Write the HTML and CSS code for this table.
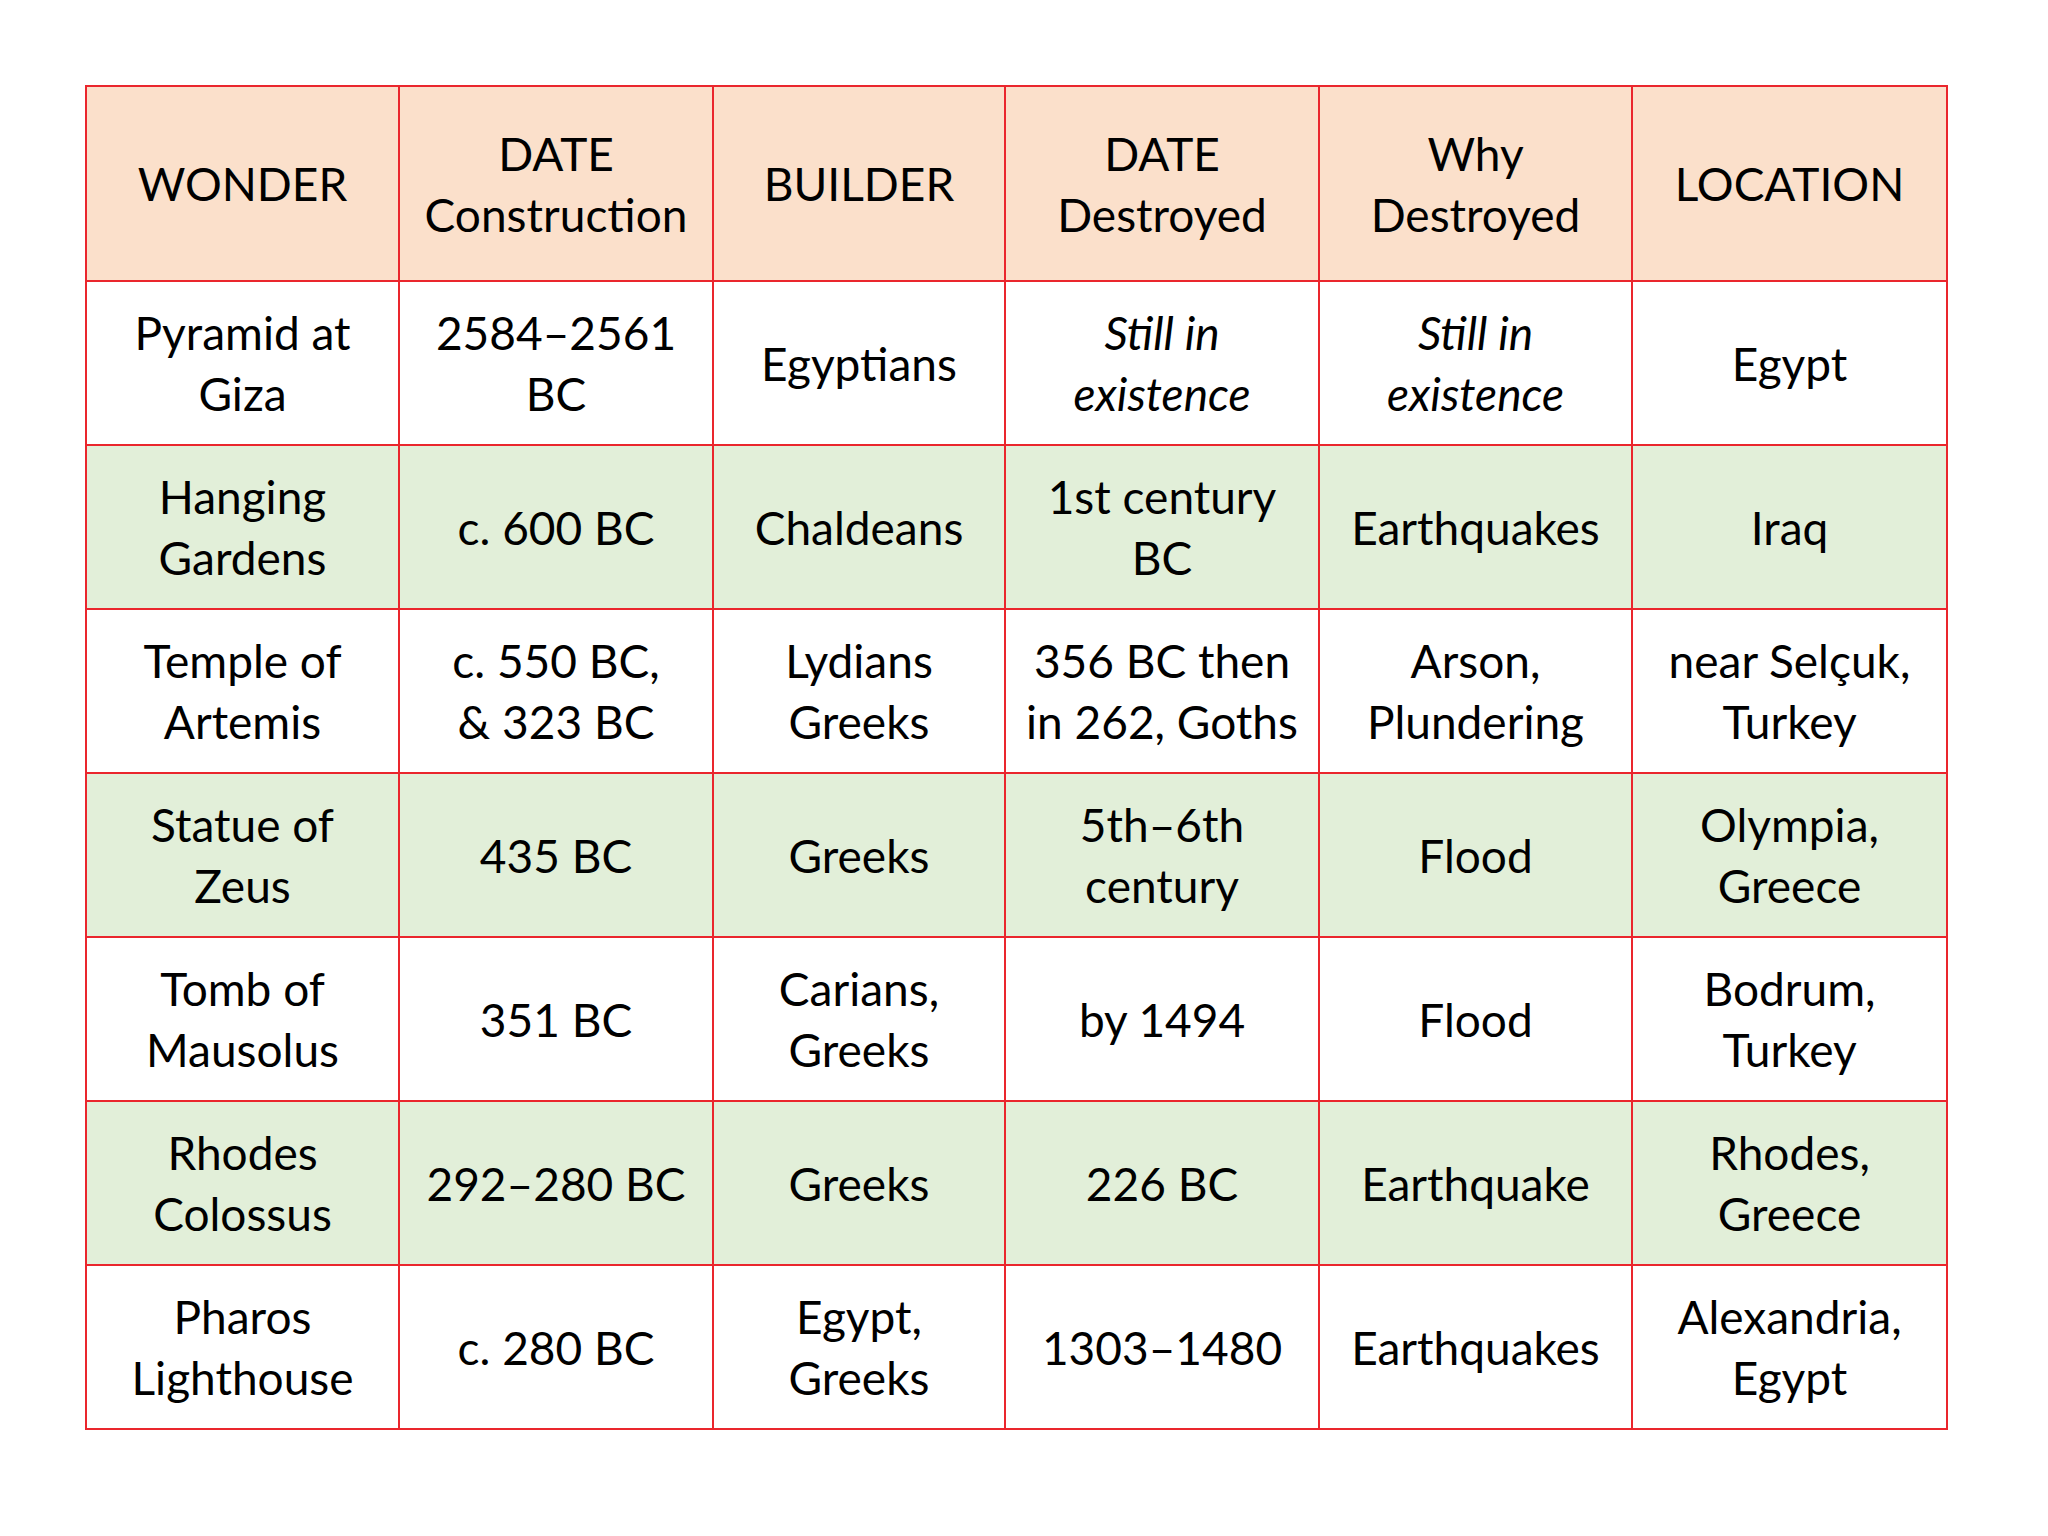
FILE: index.html
```html
<!DOCTYPE html>
<html>
<head>
<meta charset="utf-8">
<link rel="stylesheet" href="styles.css">
</head>
<body>
<table class="wonders">
  <colgroup>
    <col class="c1"><col class="c2"><col class="c3"><col class="c4"><col class="c5"><col class="c6">
  </colgroup>
  <thead>
    <tr class="head">
      <th>WONDER</th>
      <th>DATE<br>Construction</th>
      <th>BUILDER</th>
      <th>DATE<br>Destroyed</th>
      <th>Why<br>Destroyed</th>
      <th>LOCATION</th>
    </tr>
  </thead>
  <tbody>
    <tr class="plain">
      <td>Pyramid at<br>Giza</td>
      <td>2584–2561<br>BC</td>
      <td>Egyptians</td>
      <td class="it">Still in<br>existence</td>
      <td class="it">Still in<br>existence</td>
      <td>Egypt</td>
    </tr>
    <tr class="green">
      <td>Hanging<br>Gardens</td>
      <td>c. 600 BC</td>
      <td>Chaldeans</td>
      <td>1st century<br>BC</td>
      <td>Earthquakes</td>
      <td>Iraq</td>
    </tr>
    <tr class="plain">
      <td>Temple of<br>Artemis</td>
      <td>c. 550 BC,<br>&amp; 323 BC</td>
      <td>Lydians<br>Greeks</td>
      <td>356 BC then<br>in 262, Goths</td>
      <td>Arson,<br>Plundering</td>
      <td>near Selçuk,<br>Turkey</td>
    </tr>
    <tr class="green">
      <td>Statue of<br>Zeus</td>
      <td>435 BC</td>
      <td>Greeks</td>
      <td>5th–6th<br>century</td>
      <td>Flood</td>
      <td>Olympia,<br>Greece</td>
    </tr>
    <tr class="plain">
      <td>Tomb of<br>Mausolus</td>
      <td>351 BC</td>
      <td>Carians,<br>Greeks</td>
      <td>by 1494</td>
      <td>Flood</td>
      <td>Bodrum,<br>Turkey</td>
    </tr>
    <tr class="green">
      <td>Rhodes<br>Colossus</td>
      <td>292–280 BC</td>
      <td>Greeks</td>
      <td>226 BC</td>
      <td>Earthquake</td>
      <td>Rhodes,<br>Greece</td>
    </tr>
    <tr class="plain last">
      <td>Pharos<br>Lighthouse</td>
      <td>c. 280 BC</td>
      <td>Egypt,<br>Greeks</td>
      <td>1303–1480</td>
      <td>Earthquakes</td>
      <td>Alexandria,<br>Egypt</td>
    </tr>
  </tbody>
</table>
</body>
</html>
```
FILE: styles.css
```css
html, body {
  margin: 0;
  padding: 0;
  background: #ffffff;
}
body {
  padding: 85px 0 0 85px;
  font-family: Lato, "Open Sans", "Liberation Sans", sans-serif;
  color: #000000;
}
.wonders {
  border-collapse: collapse;
  table-layout: fixed;
  width: 1861px;
}
.c1 { width: 313px; }
.c2 { width: 314px; }
.c3 { width: 292px; }
.c4 { width: 314px; }
.c5 { width: 313px; }
.c6 { width: 315px; }
.wonders th,
.wonders td {
  border: 2px solid #ea262d;
  padding: 0;
  text-align: center;
  vertical-align: middle;
  font-size: 46px;
  line-height: 61px;
  font-weight: 400;
  white-space: nowrap;
}
.head th {
  background: #fbe0cb;
  height: 193px;
}
.plain td {
  background: #ffffff;
  height: 162px;
}
.green td {
  background: #e2efd9;
  height: 162px;
}
.wonders td.it {
  font-style: italic;
}
```
